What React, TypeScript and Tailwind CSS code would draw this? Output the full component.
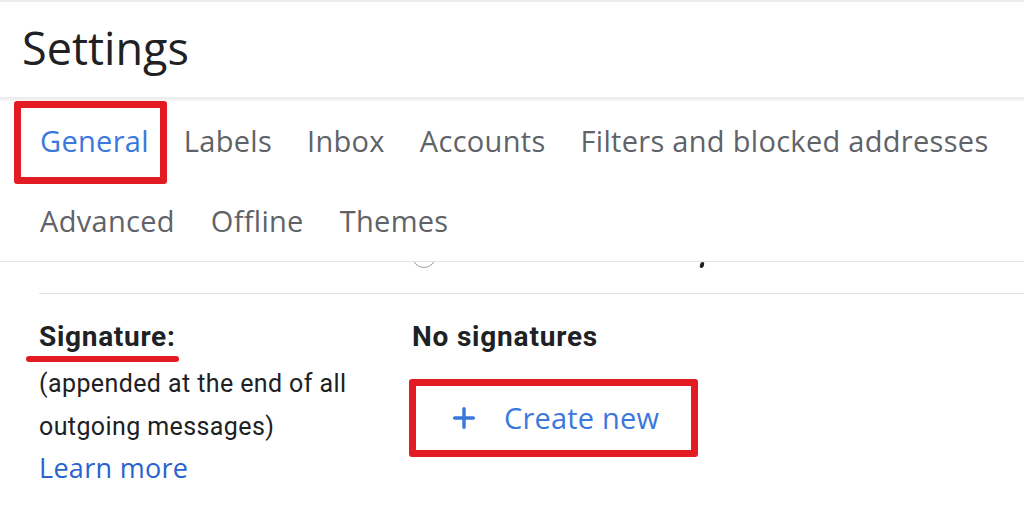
import { Plus } from "lucide-react";

const tabsRow1 = ["General", "Labels", "Inbox", "Accounts", "Filters and blocked addresses"];
const tabsRow2 = ["Advanced", "Offline", "Themes"];

function Tab({ label, active }: { label: string; active?: boolean }) {
  return (
    <div className="relative flex h-[80px] items-center">
      <span
        className={
          "text-[29px] tracking-[0.3px] " + (active ? "text-[#3a78dc]" : "text-[#5f6368]")
        }
      >
        {label}
      </span>
      {active && (
        <div className="absolute left-[-26px] right-[-18px] top-0 bottom-[-3px] rounded-[3px] border-[7px] border-[#e31b23]" />
      )}
    </div>
  );
}

export default function App() {
  return (
    <div
      className="relative h-[507px] w-[1024px] overflow-hidden bg-white"
      style={{ fontFamily: "'Open Sans', Roboto, sans-serif" }}
    >
      {/* Header */}
      <div className="h-[97px] border-t-2 border-[#ececec] pl-[22px] pt-[18px]">
        <h1 className="text-[45px] leading-[56px] text-[#202124]">Settings</h1>
      </div>
      <div className="h-[4px] bg-gradient-to-b from-[#e9e9e9] to-[#f7f7f7]" />

      {/* Tabs */}
      <div className="border-b border-[#e4e4e4] pl-[40px]">
        <div className="flex gap-[35px]">
          {tabsRow1.map((t) => (
            <Tab key={t} label={t} active={t === "General"} />
          ))}
        </div>
        <div className="flex gap-[36px]">
          {tabsRow2.map((t) => (
            <Tab key={t} label={t} />
          ))}
        </div>
      </div>

      {/* Scrolled content */}
      <div className="relative overflow-hidden pl-[39px]">
        {/* remnants of the row above, scrolled under the tabs */}
        <div className="absolute left-[412px] top-[-18px] h-[24px] w-[24px] rounded-full border-[1.5px] border-[#9aa0a6]" />
        <div className="absolute left-[700px] top-[0px] h-[6px] w-[4px] -skew-x-12 rounded-sm bg-[#202124]" />
        <div className="h-[32px] border-b border-[#e2e2e2]" />

        <div className="flex pt-[27px]" style={{ fontFamily: "Roboto, 'Open Sans', sans-serif" }}>
          <div className="w-[373px]">
            <div className="relative inline-block">
              <span className="text-[28px] font-bold leading-[32px] tracking-[0.7px] text-[#202124]">
                Signature:
              </span>
              <div className="absolute left-[-13px] right-[-3px] top-[35px] h-[6px] rounded-full bg-[#e31b23]" />
            </div>
            <p className="mt-[9px] text-[25px] leading-[43px] tracking-[0.4px] text-[#202124]">
              (appended at the end of all
              <br />
              outgoing messages)
            </p>
            <a
              className="block text-[27px] leading-[40px] tracking-[0.3px] text-[#2a62cf]"
              style={{ fontFamily: "'Open Sans', Roboto, sans-serif" }}
            >
              Learn more
            </a>
          </div>
          <div>
            <p className="text-[28px] font-bold leading-[32px] tracking-[0.8px] text-[#202124]">
              No signatures
            </p>
            <div className="mt-[26px] ml-[-3px] flex h-[78px] w-[289px] items-center gap-[24px] rounded-[3px] border-[7px] border-[#e31b23] pl-[32px]">
              <Plus className="h-[32px] w-[32px] text-[#3a78dc]" strokeWidth={2.6} />
              <span
                className="text-[29px] tracking-[0.2px] text-[#3a78dc]"
                style={{ fontFamily: "'Open Sans', Roboto, sans-serif" }}
              >
                Create new
              </span>
            </div>
          </div>
        </div>
      </div>
    </div>
  );
}
